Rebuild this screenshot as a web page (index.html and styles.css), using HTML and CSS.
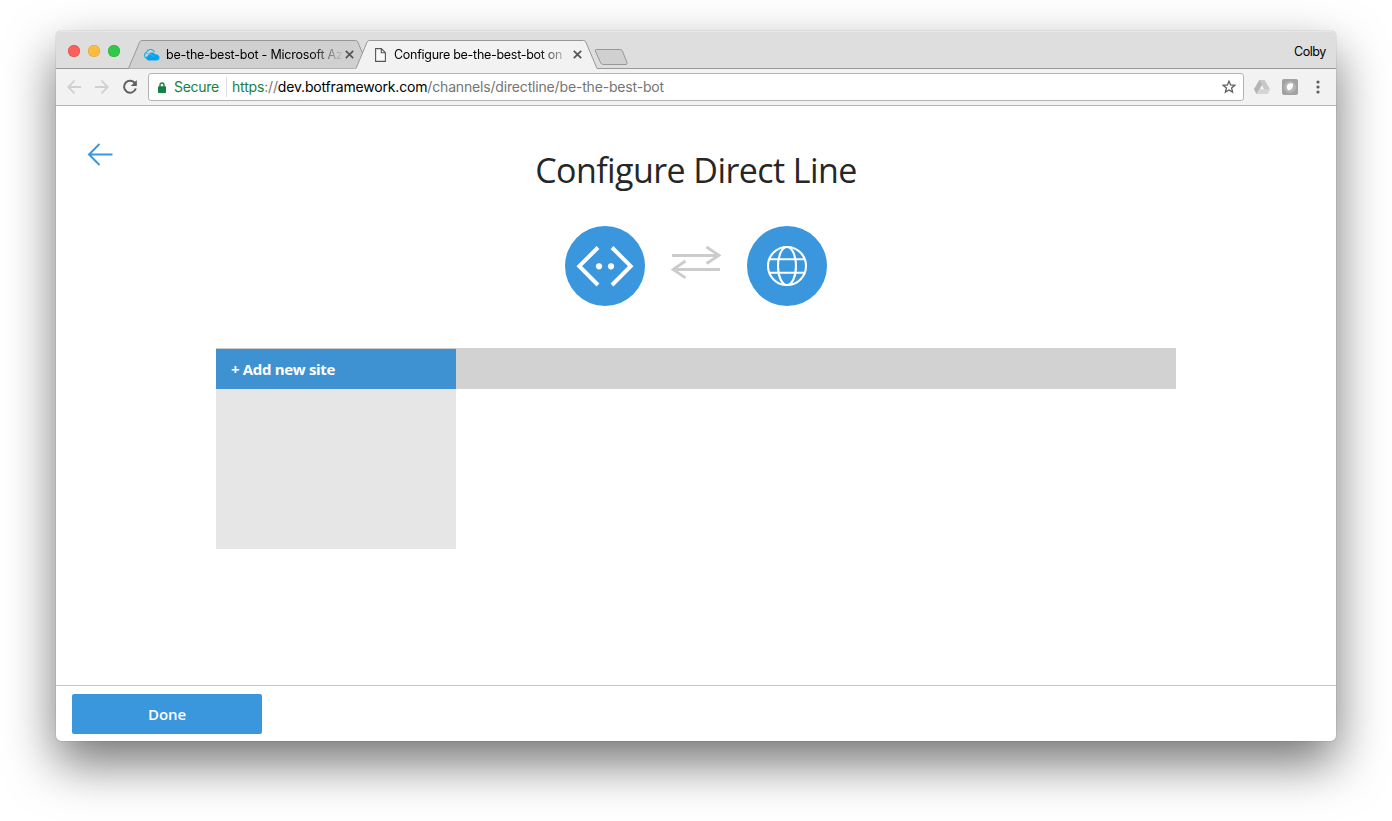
FILE: index.html
```html
<!DOCTYPE html>
<html lang="en">
<head>
<meta charset="utf-8">
<title>Configure Direct Line</title>
<link rel="stylesheet" href="styles.css">
</head>
<body>
<div class="window">
  <header class="tabstrip">
    <div class="lights"><i class="light red"></i><i class="light yellow"></i><i class="light green"></i></div>
    <div class="tab tab-back">
      <svg class="tab-shape" width="242" height="29" viewBox="0 0 242 29"><path d="M.5 28.500 11.600 2.200Q12.400.5 14 .5H227.500q1.600 0 2.400 1.700L241 28.500" fill="#d0d0d0" stroke="#989898"/></svg>
      <svg class="cloud" width="17" height="12" viewBox="0 0 17 12"><path d="M4.500 9.200H4A3 3 0 0 1 3.500 3.400 4.300 4.300 0 0 1 11.500 3" fill="none" stroke="#1db0ee" stroke-width="1.200"/><path d="M5.500 11.500a2.400 2.400 0 0 1-.5-4.700C6 3.500 10 2 12 5.200c2.500-.2 4.500 1.300 4.500 3.300 0 1.800-1.300 3-3 3z" fill="#00a4ef"/><path d="M1.500 5.500c2.500-1.700 5.500-1 9.500 2.300" fill="none" stroke="#45bff2" stroke-width=".9"/></svg>
      <span class="tab-title title-back">be-the-best-bot - Microsoft Az</span>
      <svg class="close" width="9" height="9" viewBox="0 0 9 9"><path d="M.8.8l7.400 7.400M8.200.8.8 8.200"/></svg>
    </div>
    <div class="tab tab-front">
      <svg class="tab-shape" width="242" height="29" viewBox="0 0 242 29"><path d="M0 28.500 11 2.200Q11.800.5 13.500.5H227.500q1.700 0 2.400 1.700L241 28.500V29H0z" fill="#f2f2f2"/><path d="M0 28.500 11 2.200Q11.800.5 13.500.5H227.500q1.700 0 2.400 1.700L241 28.500" fill="none" stroke="#989898"/></svg>
      <svg class="page" width="11" height="14" viewBox="0 0 11 14"><path d="M.6.600H6.300L10.400 4.700V13.400H.6zM6.300.600V4.700H10.400" fill="#fafafa" stroke="#555" stroke-width="1.100"/></svg>
      <span class="tab-title title-front">Configure be-the-best-bot on</span>
      <svg class="close" width="9" height="9" viewBox="0 0 9 9"><path d="M.8.8l7.400 7.400M8.200.8.8 8.200"/></svg>
    </div>
    <svg class="new-tab" width="35" height="18" viewBox="0 0 35 18"><path d="M2.500 1.500H26q1.800 0 2.400 1.500L33 14.500q.5 2-1 2H9.500q-2 0-2.800-1.500L1.300 3q-.5-1.500 1.200-1.500z" fill="#d0d0d0" stroke="#989898"/></svg>
    <span class="user">Colby</span>
  </header>
  <div class="toolbar">
    <svg class="nav" width="14" height="14" viewBox="0 0 14 14"><path d="M14 7H1M7.500.7 1.200 7l6.300 6.300" fill="none" stroke="#d0d0d0" stroke-width="1.800"/></svg>
    <svg class="nav" width="14" height="14" viewBox="0 0 14 14"><path d="M0 7h13M6.500.7 12.800 7l-6.300 6.300" fill="none" stroke="#d0d0d0" stroke-width="1.800"/></svg>
    <svg class="reload" width="16" height="16" viewBox="0 0 16 16"><path d="M13.200 4.600A6 6 0 1 0 13.800 9.500" fill="none" stroke="#5f5f5f" stroke-width="2"/><path d="M14.800 1v6H8.800z" fill="#5f5f5f"/></svg>
    <div class="omnibox">
      <svg class="lock" width="8" height="11" viewBox="0 0 8 11"><path d="M2 5V3a2 2 0 0 1 4 0v2" fill="none" stroke="#188045" stroke-width="1.400"/><rect y="4.300" width="8" height="6.700" rx=".8" fill="#188045"/></svg>
      <span class="secure">Secure</span>
      <span class="url"><span class="scheme">https</span>://<span class="host">dev.botframework.com</span>/channels/directline/be-the-best-bot</span>
      <svg class="star" width="14" height="14" viewBox="0 0 14 14"><path d="M7 1.200 8.600 5l4.200.3-3.200 2.700 1 4.100L7 9.900l-3.600 2.200 1-4.100L1.200 5.300 5.400 5z" fill="none" stroke="#5f5f5f" stroke-width="1.300"/></svg>
    </div>
    <svg class="drive" width="16" height="14" viewBox="0 0 16 14"><path d="M5.400 0h5.200L16 9.300 13.400 14H2.600L0 9.300z" fill="#c8c8c8"/><path d="M5.400 0 0 9.300 2.600 14 8 4.600z" fill="#b5b5b5"/><path d="M5.300 9.300 2.600 14h10.800L16 9.300z" fill="#d5d5d5"/><path d="M8 5.500 10.200 9.300H5.800z" fill="#f5f5f5"/></svg>
    <svg class="ext" width="16" height="16" viewBox="0 0 16 16"><rect width="16" height="16" rx="2" fill="#a2a2a2"/><circle cx="8" cy="8" r="6" fill="#b4b4b4"/><path d="M5 6.500C6 4 9 4 10.800 4.500 11.500 7 10.500 10.500 7 11.500 5 10.800 4.300 8.500 5 6.500z" fill="#fff"/></svg>
    <svg class="menu" width="4" height="14" viewBox="0 0 4 14"><g fill="#5f5f5f"><circle cx="2" cy="2" r="1.600"/><circle cx="2" cy="7" r="1.600"/><circle cx="2" cy="12" r="1.600"/></g></svg>
  </div>
  <main class="content">
    <svg class="back" width="26" height="24" viewBox="0 0 26 24"><path d="M25.500 11.500H2M12.500 1 2 11.500 12.500 22" fill="none" stroke="#3a96dd" stroke-width="2"/></svg>
    <h1 class="heading">Configure Direct Line</h1>
    <div class="link-art">
      <svg width="80" height="80" viewBox="0 0 80 80"><circle cx="40" cy="40" r="40" fill="#3a96dd"/><path d="M33 21.500 14.300 40.200 33 59M47 21.500l18.700 18.700L47 59" fill="none" stroke="#fff" stroke-width="4"/><circle cx="34" cy="40.300" r="3.100" fill="#fff"/><circle cx="46" cy="40.300" r="3.100" fill="#fff"/></svg>
      <svg class="arrows" width="50" height="34" viewBox="0 0 50 34"><path d="M1 10.500H48M35.500 2 48 10.300 35.500 18.500M49 24.500H2M14.500 16 2 24.500l12.500 8.300" fill="none" stroke="#ccc" stroke-width="2.800"/></svg>
      <svg width="80" height="80" viewBox="0 0 80 80"><circle cx="40" cy="40" r="40" fill="#3a96dd"/><g fill="none" stroke="#fff" stroke-width="2.100"><circle cx="40" cy="40" r="19"/><ellipse cx="40" cy="40" rx="9" ry="19"/><path d="M23 33.300H57M23 46.700H57"/></g></svg>
    </div>
    <section class="sites">
      <div class="site-list"><div class="add">+ Add new site</div></div>
      <div class="site-head"></div>
    </section>
  </main>
  <footer class="footer"><div class="done">Done</div></footer>
</div>
</body>
</html>
```
FILE: styles.css
```css
* { box-sizing: border-box; }
body { margin: 0; height: 821px; padding-top: 31px; background: #fff; overflow: hidden; font-family: Inter, sans-serif; }
svg { display: block; flex: none; }
.window {
  width: 1280px; height: 710px; margin: 0 auto;
  display: flex; flex-direction: column;
  border-radius: 5px; background: #fff;
  box-shadow: 0 0 1px rgba(0,0,0,.55), 0 22px 50px rgba(0,0,0,.55);
}
.tabstrip {
  height: 38px; flex: none; display: flex; align-items: flex-end;
  background: #dedede; border-radius: 5px 5px 0 0;
  box-shadow: inset 0 -1px #989898, inset 0 1px #e8e8e8;
}
.lights { display: flex; gap: 8px; padding: 2px 0 0 12px; width: 72px; height: 38px; align-items: center; }
.light { width: 12px; height: 12px; border-radius: 50%; }
.red { background: #fc605b; box-shadow: inset 0 0 0 .5px #dc4845; }
.yellow { background: #fdbc40; box-shadow: inset 0 0 0 .5px #dca034; }
.green { background: #34c84a; box-shadow: inset 0 0 0 .5px #27a93b; }
.tab { display: grid; align-items: center; height: 29px; width: 242px; flex: none; font-size: 12.5px; color: #000; }
.tab > * { grid-row: 1; }
.tab-shape { grid-column: 1 / -1; }
.tab-back { grid-template-columns: 15px 23px 178px 26px; }
.tab-front { grid-template-columns: 19px 19px 178px 26px; margin-left: -14px; }
.cloud, .page { grid-column: 2; z-index: 1; }
.tab-title {
  grid-column: 3; z-index: 1; white-space: nowrap; width: 176px; line-height: 18px;
  -webkit-mask-image: linear-gradient(90deg, #000 82%, transparent 101%);
  mask-image: linear-gradient(90deg, #000 82%, transparent 101%);
}
.title-back { letter-spacing: -.22px; }
.title-front { letter-spacing: -.28px; }
.close { grid-column: 4; z-index: 1; margin-left: 1px; fill: none; stroke: #555; stroke-width: 1.7; }
.new-tab { margin: 0 0 3px -4px; }
.user { margin-left: auto; padding: 0 10px 9px 0; font-size: 12.5px; letter-spacing: -.4px; line-height: 16px; color: #000; }
.toolbar { height: 37px; flex: none; display: flex; align-items: center; padding: 0 16px 0 11px; background: #f2f2f2; border-bottom: 1px solid #b4b4b4; }
.nav { margin-right: 14px; }
.reload { margin: 0 10px 0 -1px; }
.omnibox {
  width: 1096px; height: 28px; padding: 0 7px 0 9px; display: flex; align-items: center; flex: none;
  border: 1px solid #b4b4b4; border-radius: 3px; background: #fff; font-size: 14px; line-height: 20px; white-space: nowrap;
}
.secure { margin-left: 8px; width: 52px; color: #188045; box-sizing: content-box; border-right: 1px solid #e0e0e0; letter-spacing: -.3px; }
.url { margin-left: 5px; color: #757575; letter-spacing: -.17px; padding-bottom: 1px; }
.scheme { color: #188045; }
.host { color: #000; }
.star { margin-left: auto; }
.drive { margin-left: 10px; }
.ext { margin-left: 12px; }
.menu { margin-left: 18px; }
.content { flex: 1; font-family: "Open Sans", "Noto Sans", sans-serif; display: grid; grid-template: 120px 122px auto / 160px 960px 160px; }
.back { grid-area: 1 / 1; margin: 37px 0 0 31px; }
.heading { grid-area: 1 / 2; margin: 41px 0 0; text-align: center; font-weight: 400; font-size: 34px; letter-spacing: -.58px; line-height: 46px; color: #262626; white-space: nowrap; }
.link-art { grid-area: 2 / 2; display: flex; justify-content: center; }
.arrows { margin: 19px 26px 0; }
.sites { grid-area: 3 / 2; display: flex; }
.site-list { width: 240px; height: 201px; background: #e6e6e6; border-top: 1px solid #ccc; }
.add { height: 40px; padding-left: 15px; background: #3f92d2; color: #fff; font: 700 15px/41px "Open Sans", sans-serif; letter-spacing: -.32px; }
.site-head { flex: 1; height: 41px; background: #d2d2d2; }
.footer { height: 56px; flex: none; border-top: 1px solid #c8c8c8; padding: 8px 16px; }
.done { width: 190px; height: 40px; border-radius: 2px; background: #3a96dd; color: #fff; text-align: center; font: 600 15px/41px "Open Sans", sans-serif; letter-spacing: -.1px; }
```
